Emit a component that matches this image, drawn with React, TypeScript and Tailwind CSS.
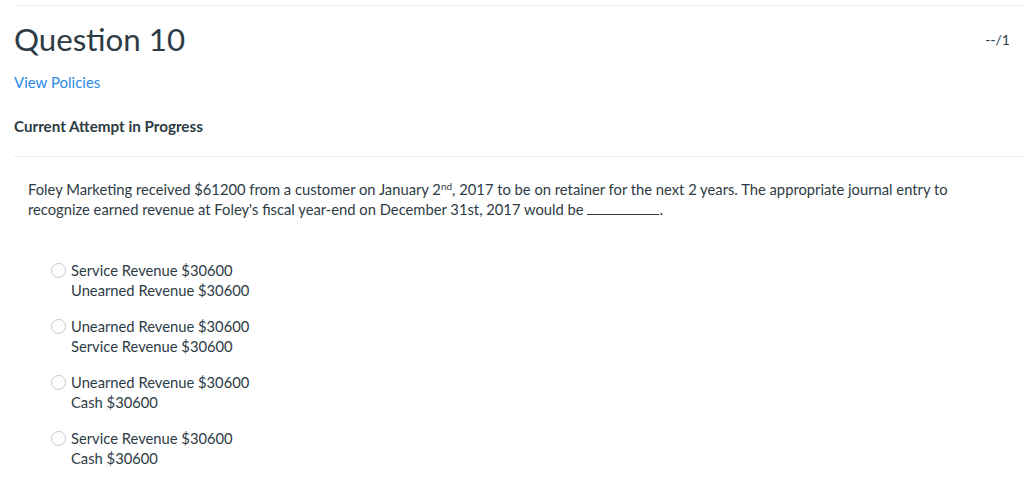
const options = [
  ['Service Revenue $30600', 'Unearned Revenue $30600'],
  ['Unearned Revenue $30600', 'Service Revenue $30600'],
  ['Unearned Revenue $30600', 'Cash $30600'],
  ['Service Revenue $30600', 'Cash $30600'],
]

export default function App() {
  return (
    <div className="min-h-[497px] bg-white pl-[14px] pt-[5px] font-['Lato',sans-serif] text-[#2d3b45]">
      <div className="border-t border-[#ececec]" />
      <div className="flex items-start justify-between">
        <h1 className="mt-[11px] text-[31.3px] leading-[44px] font-normal">Question 10</h1>
        <span className="mt-[22px] mr-[14px] text-[14px] leading-[24px]">--/1</span>
      </div>
      <a className="mt-[11px] block text-[15px] leading-[20px] text-[#2b8ae6]" href="#">
        View Policies
      </a>
      <p className="mt-[24px] text-[15.2px] leading-[20px] font-bold">Current Attempt in Progress</p>
      <div className="mt-[20px] border-t border-[#ececec]" />
      <div className="pl-[14px]">
        <p className="mt-[22px] max-w-[925px] text-[14.75px] leading-[20px]">
          Foley Marketing received $61200 from a customer on January 2<sup className="text-[10px] leading-none">nd</sup>, 2017 to be on retainer for the next 2 years. The appropriate journal entry to recognize earned revenue at Foley's fiscal year-end on December 31st, 2017 would be{' '}
          <span className="inline-block w-[72px] border-b border-[#2d3b45] align-baseline" />.
        </p>
        <div className="mt-[41px] flex flex-col gap-[16px] pl-[23px]">
          {options.map((lines, i) => (
            <label key={i} className="flex items-start gap-[5px] text-[14.75px] leading-[20px]">
              <span className="mt-[3px] h-[15px] w-[15px] shrink-0 rounded-full border border-[#c8c8c8] bg-white" />
              <span>
                {lines[0]}
                <br />
                {lines[1]}
              </span>
            </label>
          ))}
        </div>
      </div>
    </div>
  )
}
